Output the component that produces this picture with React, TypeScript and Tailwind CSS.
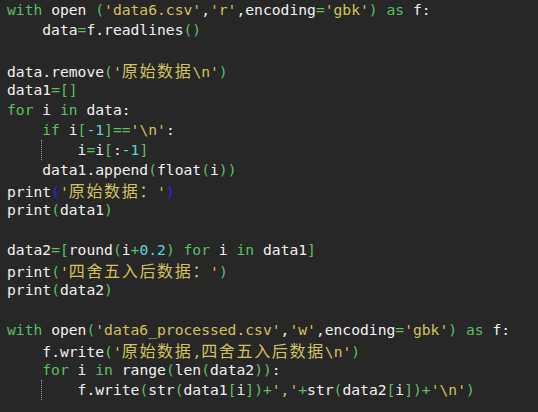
import React from "react";

type Kind = "kw" | "str" | "num" | "op" | "plain" | "blue";

const colorOf: Record<Kind, string> = {
  kw: "text-[#5cbf63]",
  str: "text-[#d4c25a]",
  num: "text-[#5ed3dd]",
  op: "text-[#5cbf63]",
  plain: "text-[#f2f2f2]",
  blue: "text-[#2424ff]",
};

const KEYWORDS = ["with", "as", "for", "in", "if"];

// lines of the script; guide = draw dotted indent guide at column 4
const lines: { text: string; guide?: boolean; blue?: boolean }[] = [
  { text: "with open ('data6.csv','r',encoding='gbk') as f:" },
  { text: "    data=f.readlines()" },
  { text: "" },
  { text: "data.remove('原始数据\\n')" },
  { text: "data1=[]" },
  { text: "for i in data:" },
  { text: "    if i[-1]=='\\n':" },
  { text: "        i=i[:-1]", guide: true },
  { text: "    data1.append(float(i))" },
  { text: "print('原始数据：')", blue: true },
  { text: "print(data1)" },
  { text: "" },
  { text: "data2=[round(i+0.2) for i in data1]" },
  { text: "print('四舍五入后数据：')" },
  { text: "print(data2)" },
  { text: "" },
  { text: "with open('data6_processed.csv','w',encoding='gbk') as f:" },
  { text: "    f.write('原始数据,四舍五入后数据\\n')" },
  { text: "    for i in range(len(data2)):" },
  { text: "        f.write(str(data1[i])+','+str(data2[i])+'\\n')", guide: true },
];

function tokenize(src: string, blue?: boolean): [string, Kind][] {
  const out: [string, Kind][] = [];
  const re = /('[^']*')|([A-Za-z_][A-Za-z0-9_]*)|((?<=[\[:])-?\d+(?:\.\d+)?|\d+\.\d+)|([()\[\]=+])|(\s+)|(.)/g;
  let m: RegExpExecArray | null;
  while ((m = re.exec(src))) {
    if (m[1]) out.push([m[1], "str"]);
    else if (m[2]) out.push([m[2], KEYWORDS.includes(m[2]) ? "kw" : "plain"]);
    else if (m[3]) out.push([m[3], "num"]);
    else if (m[4]) out.push([m[4], blue && "()".includes(m[4]) ? "blue" : "op"]);
    else out.push([m[0], "plain"]);
  }
  return out;
}

function Token({ text, kind }: { text: string; kind: Kind }) {
  const parts = text.split(/([\u3000-\u9fff\uff00-\uffef]+)/);
  return (
    <span className={colorOf[kind]}>
      {parts.map((p, i) =>
        /[\u3000-\u9fff\uff00-\uffef]/.test(p) ? (
          <span
            key={i}
            className="text-[16px] tracking-[1.66px] [font-family:'Noto_Sans_CJK_SC',sans-serif]"
          >
            {p}
          </span>
        ) : (
          <React.Fragment key={i}>{p}</React.Fragment>
        )
      )}
    </span>
  );
}

function Line({ text, guide, blue }: { text: string; guide?: boolean; blue?: boolean }) {
  let rest = text;
  let lead: React.ReactNode = null;
  if (guide) {
    lead = (
      <>
        {"    "}
        <span className="inline-block -ml-px h-[20px] border-l border-dotted border-[#9a9a9a] align-top">
          {"    "}
        </span>
      </>
    );
    rest = text.slice(8);
  }
  return (
    <div className="h-[20px] whitespace-pre">
      {lead}
      {tokenize(rest, blue).map(([t, k], i) => (
        <Token key={i} text={t} kind={k} />
      ))}
    </div>
  );
}

export default function App() {
  return (
    <div className="w-[538px] h-[412px] overflow-hidden bg-[#272727] pl-[7px] text-[14.67px] leading-[20px] [font-family:'DejaVu_Sans_Mono','Noto_Sans_CJK_SC',monospace]">
      {lines.map((l, i) => (
        <Line key={i} {...l} />
      ))}
    </div>
  );
}
